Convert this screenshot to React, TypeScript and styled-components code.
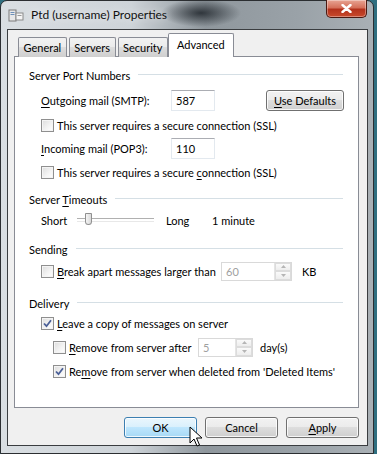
import React from 'react';
import styled, { createGlobalStyle, css } from 'styled-components';

const GlobalStyle = createGlobalStyle`
  html, body {
    margin: 0;
    padding: 0;
    background: #2f6f80;
  }
  body {
    font-family: Lato, "Open Sans", sans-serif;
    font-size: 11px;
    color: #000;
  }
`;

const Window = styled.div`
  width: 374px;
  height: 454px;
  box-sizing: border-box;
  display: flex;
  flex-direction: column;
  border: 1px solid #2b2e31;
  border-radius: 7px 7px 0 0;
  background:
    radial-gradient(ellipse 40px 14px at 200px 12px, rgba(30, 36, 42, 0.85), rgba(30, 36, 42, 0) 100%),
    linear-gradient(90deg, #d9dee2 0%, #cdd3d8 35%, #8f979d 55%, #9aa2a8 80%, #a9b0b5 100%);
  padding: 0 5px 7px 6px;
`;

const TitleBar = styled.div`
  height: 28px;
  display: flex;
  align-items: flex-start;
`;

const TitleIcon = styled.svg`
  width: 16px;
  height: 16px;
  margin: 6px 0 0 1px;
  flex: none;
`;

const TitleText = styled.div`
  margin: 6px 0 0 7px;
  font-size: 12px;
  color: #111;
  text-shadow: 0 0 8px rgba(255, 255, 255, 0.9);
  flex: 1;
`;

const CloseButton = styled.div`
  width: 41px;
  height: 18px;
  margin-top: -1px;
  margin-right: 1px;
  box-sizing: border-box;
  border: 1px solid #4a1a12;
  border-top: none;
  border-radius: 0 0 5px 5px;
  background: linear-gradient(180deg, #e8a493 0%, #d5705a 45%, #b3321c 55%, #c84a2c 100%);
  box-shadow: inset 0 0 0 1px rgba(255, 255, 255, 0.35);
  display: flex;
  align-items: center;
  justify-content: center;
`;

const Client = styled.div`
  flex: 1;
  background: #f0f0f0;
  border: 1px solid #3a3d40;
  display: flex;
  flex-direction: column;
  padding: 0 8px 0 6px;
`;

const TabStrip = styled.div`
  display: flex;
  align-items: flex-end;
  height: 27px;
  padding-left: 4px;
  position: relative;
  z-index: 1;
  margin-bottom: -1px;
`;

const Tab = styled.div<{ $active?: boolean }>`
  box-sizing: border-box;
  height: 20px;
  padding: 0 4.5px;
  margin-right: 2px;
  border: 1px solid #898c95;
  border-bottom: none;
  border-radius: 2px 2px 0 0;
  background: linear-gradient(180deg, #f2f2f2 0%, #ebebeb 50%, #dddddd 50%, #cfcfcf 100%);
  display: flex;
  align-items: center;
  color: #000;
  ${(p) =>
    p.$active &&
    css`
      height: 24px;
      margin-left: -2px;
      padding: 0 8px 3px;
      background: #fff;
      z-index: 2;
    `}
`;

const Panel = styled.div`
  height: 352px;
  box-sizing: border-box;
  background: #fff;
  border: 1px solid #898c95;
  padding: 10px 15px 0 14px;
  display: flex;
  flex-direction: column;
`;

const GroupHeading = styled.div<{ $mt: number }>`
  display: flex;
  align-items: center;
  height: 16px;
  margin-top: ${(p) => p.$mt}px;
  &::after {
    content: '';
    flex: 1;
    margin-left: 8px;
    border-top: 1px solid #d5dfe5;
    border-bottom: 1px solid #fff;
  }
`;

const Row = styled.div<{ $mt: number; $h: number; $indent?: number }>`
  display: flex;
  align-items: center;
  height: ${(p) => p.$h}px;
  margin-top: ${(p) => p.$mt}px;
  padding-left: ${(p) => p.$indent ?? 12}px;
  white-space: nowrap;
`;

const FieldLabel = styled.span<{ $w: number }>`
  width: ${(p) => p.$w}px;
  flex: none;
`;

const Gap = styled.span<{ $w: number }>`
  width: ${(p) => p.$w}px;
  flex: none;
`;

const TextBox = styled.div<{ $w: number; $disabled?: boolean }>`
  box-sizing: border-box;
  width: ${(p) => p.$w}px;
  height: 21px;
  border: 1px solid #e3e9ef;
  border-top-color: #abadb3;
  background: #fff;
  padding: 0 0 0 4px;
  display: flex;
  align-items: center;
  flex: none;
  color: ${(p) => (p.$disabled ? '#a0a0a0' : '#000')};
`;

const SpinBox = styled(TextBox)`
  height: 19px;
  padding-right: 0;
  justify-content: space-between;
  border-color: #d9d9d9;
`;

const Spinner = styled.div`
  width: 16px;
  height: 17px;
  display: flex;
  flex-direction: column;
  border-left: 1px solid #e4e4e4;
`;

const SpinHalf = styled.div`
  flex: 1;
  display: flex;
  align-items: center;
  justify-content: center;
  background: linear-gradient(180deg, #fafafa, #ededed);
  border: 1px solid #dcdcdc;
  box-sizing: border-box;
`;

const Box = styled.span`
  width: 13px;
  height: 13px;
  box-sizing: border-box;
  flex: none;
  border: 1px solid #8f8f8f;
  background: linear-gradient(135deg, #dcdcdc 0%, #f4f4f4 60%, #ffffff 100%);
  box-shadow: inset 0 0 0 1px #f4f4f4;
  margin-right: 3px;
  display: flex;
  align-items: center;
  justify-content: center;
`;

const Button = styled.div<{ $w: number; $hot?: boolean }>`
  box-sizing: border-box;
  width: ${(p) => p.$w}px;
  height: 21px;
  border: 1px solid #707070;
  border-radius: 3px;
  background: linear-gradient(180deg, #f2f2f2 0%, #ebebeb 50%, #dddddd 50%, #cfcfcf 100%);
  box-shadow: inset 0 0 0 1px rgba(255, 255, 255, 0.8);
  display: flex;
  align-items: center;
  justify-content: center;
  flex: none;
  ${(p) =>
    p.$hot &&
    css`
      border-color: #3c7fb1;
      background: linear-gradient(180deg, #eaf6fd 0%, #d9f0fc 50%, #bee6fd 50%, #a7d9f5 100%);
    `}
`;

const PushRight = styled(Button)`
  margin-left: auto;
  margin-right: -1px;
`;

const ButtonRow = styled.div`
  display: flex;
  justify-content: flex-end;
  gap: 8px;
  margin-top: 9px;
  position: relative;
`;

const Track = styled.div`
  width: 77px;
  height: 18px;
  margin: 0 12px 0 8px;
  position: relative;
  display: flex;
  align-items: center;
  &::before {
    content: '';
    flex: 1;
    height: 2px;
    border-top: 1px solid #b0b0b0;
    border-bottom: 1px solid #e8e8e8;
  }
`;

const Thumb = styled.div`
  position: absolute;
  left: 8px;
  top: 2px;
  width: 7px;
  height: 12px;
  box-sizing: border-box;
  border: 1px solid #909090;
  border-radius: 1px 1px 4px 4px;
  background: linear-gradient(90deg, #f5f5f5, #dadada);
`;

const Cursor = styled.svg`
  position: absolute;
  left: 175px;
  top: 9px;
  width: 14px;
  height: 22px;
`;

const U = styled.u`
  text-decoration-thickness: 1px;
  text-underline-offset: 2px;
`;

const Check = () => (
  <svg width="9" height="9" viewBox="0 0 9 9">
    <path d="M1 4.5 L3.5 7.2 L8 1.2" fill="none" stroke="#4a5f97" strokeWidth="1.8" />
  </svg>
);

const CheckBox: React.FC<{ checked?: boolean; children: React.ReactNode }> = ({ checked, children }) => (
  <>
    <Box>{checked && <Check />}</Box>
    <span>{children}</span>
  </>
);

const Spin: React.FC<{ w: number; value: string }> = ({ w, value }) => (
  <SpinBox $w={w} $disabled>
    {value}
    <Spinner>
      <SpinHalf>
        <svg width="5" height="3" viewBox="0 0 5 3"><path d="M0 3 L2.5 0 L5 3Z" fill="#b5b5b5" /></svg>
      </SpinHalf>
      <SpinHalf>
        <svg width="5" height="3" viewBox="0 0 5 3"><path d="M0 0 L2.5 3 L5 0Z" fill="#b5b5b5" /></svg>
      </SpinHalf>
    </Spinner>
  </SpinBox>
);

const App: React.FC = () => {
  return (
    <>
      <GlobalStyle />
      <Window>
        <TitleBar>
          <TitleIcon viewBox="0 0 16 16">
            <rect x="1" y="3" width="7" height="11" fill="#e8e8e8" stroke="#7a7a7a" />
            <rect x="2.5" y="5" width="4" height="1" fill="#6d8fb8" />
            <rect x="2.5" y="7" width="4" height="1" fill="#6d8fb8" />
            <rect x="8" y="6" width="7" height="7" fill="#f4f4f4" stroke="#8a8a8a" />
            <rect x="9.5" y="8" width="4" height="1" fill="#9a9a9a" />
          </TitleIcon>
          <TitleText>Ptd (username) Properties</TitleText>
          <CloseButton>
            <svg width="11" height="9" viewBox="0 0 11 9">
              <path d="M1.5 1 L9.5 8 M9.5 1 L1.5 8" stroke="#fff" strokeWidth="2.4" strokeLinecap="round" />
            </svg>
          </CloseButton>
        </TitleBar>
        <Client>
          <TabStrip>
            <Tab>General</Tab>
            <Tab>Servers</Tab>
            <Tab>Security</Tab>
            <Tab $active>Advanced</Tab>
          </TabStrip>
          <Panel>
            <GroupHeading $mt={0}>Server Port Numbers</GroupHeading>
            <Row $mt={6} $h={22}>
              <FieldLabel $w={130}><U>O</U>utgoing mail (SMTP):</FieldLabel>
              <TextBox $w={44}>587</TextBox>
              <PushRight $w={78}>
                <span><U>U</U>se Defaults</span>
              </PushRight>
            </Row>
            <Row $mt={5} $h={19}>
              <CheckBox>This server requires a secure connection (SSL)</CheckBox>
            </Row>
            <Row $mt={2} $h={22}>
              <FieldLabel $w={130}><U>I</U>ncoming mail (POP3):</FieldLabel>
              <TextBox $w={44}>110</TextBox>
            </Row>
            <Row $mt={4} $h={18}>
              <CheckBox>This server requires a secure <U>c</U>onnection (SSL)</CheckBox>
            </Row>

            <GroupHeading $mt={10}><span>Server <U>T</U>imeouts</span></GroupHeading>
            <Row $mt={4} $h={18}>
              <FieldLabel $w={28}>Short</FieldLabel>
              <Track>
                <Thumb />
              </Track>
              <FieldLabel $w={46}>Long</FieldLabel>
              <span>1 minute</span>
            </Row>

            <GroupHeading $mt={12}>Sending</GroupHeading>
            <Row $mt={4} $h={20}>
              <Box />
              <FieldLabel $w={164}><U>B</U>reak apart messages larger than</FieldLabel>
              <Spin w={71} value="60" />
              <Gap $w={10} />
              <span>KB</span>
            </Row>

            <GroupHeading $mt={14}>Delivery</GroupHeading>
            <Row $mt={3} $h={18}>
              <CheckBox checked><U>L</U>eave a copy of messages on server</CheckBox>
            </Row>
            <Row $mt={5} $h={20} $indent={24}>
              <Box />
              <FieldLabel $w={129}><U>R</U>emove from server after</FieldLabel>
              <Spin w={55} value="5" />
              <Gap $w={7} />
              <span>day(s)</span>
            </Row>
            <Row $mt={5} $h={18} $indent={24}>
              <CheckBox checked>Re<U>m</U>ove from server when deleted from 'Deleted Items'</CheckBox>
            </Row>
          </Panel>
          <ButtonRow>
            <Button $w={73} $hot>OK</Button>
            <Button $w={73}>Cancel</Button>
            <Button $w={73}><span><U>A</U>pply</span></Button>
            <Cursor viewBox="0 0 14 22">
              <path d="M1 1 L1 17 L5 13 L8 20 L10.5 19 L7.5 12 L13 12 Z" fill="#fff" stroke="#000" strokeWidth="1" strokeLinejoin="round" />
            </Cursor>
          </ButtonRow>
        </Client>
      </Window>
    </>
  );
};

export default App;
